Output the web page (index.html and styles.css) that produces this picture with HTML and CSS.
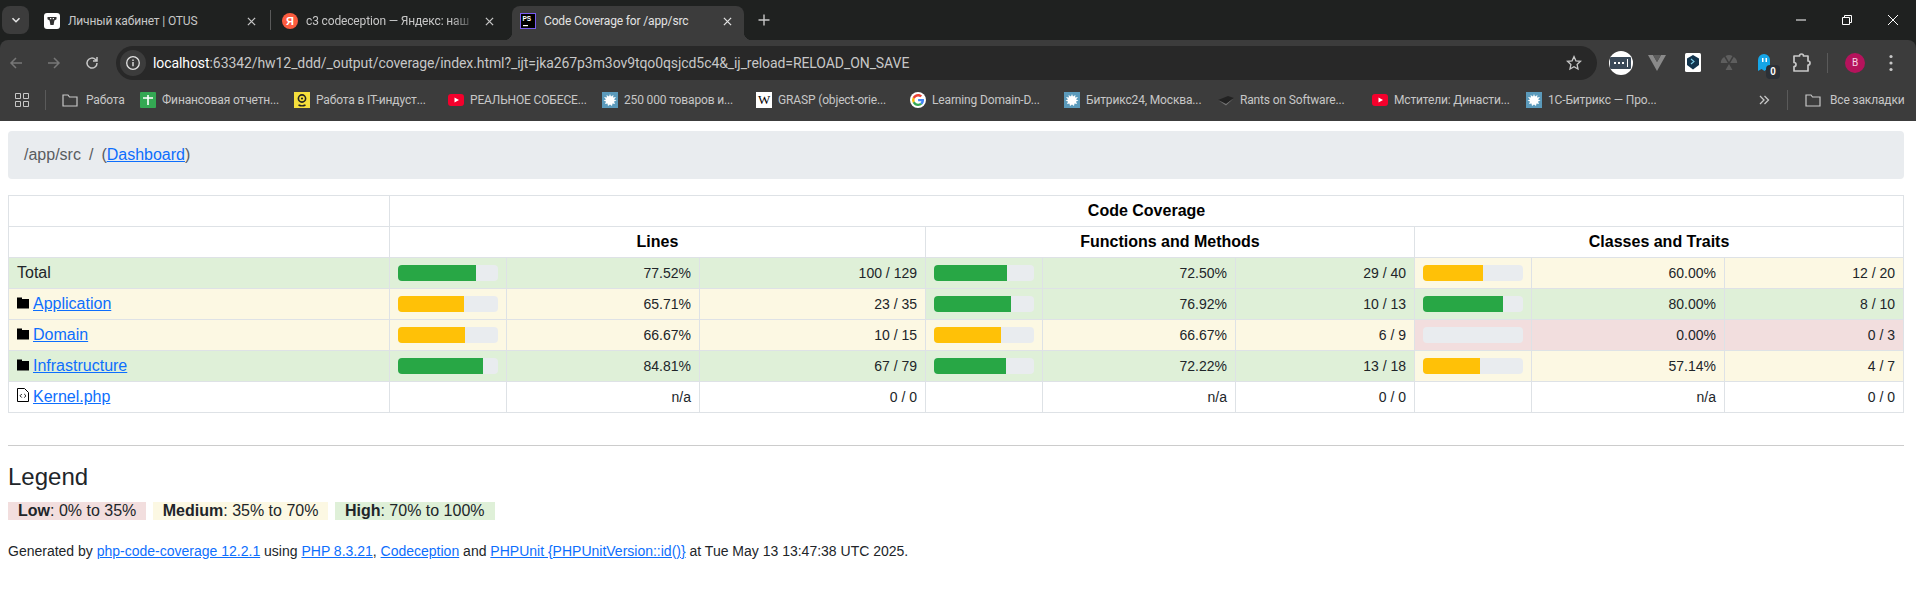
FILE: index.html
```html
<!DOCTYPE html>
<html lang="ru">

<head>
    <meta charset="UTF-8">
    <meta name="viewport" content="width=device-width, initial-scale=1.0">
    <title>Code Coverage for /app/src</title>
    <link rel="stylesheet" href="styles.css">
</head>

<body>
    <header class="browser">
        <div class="tabstrip">
            <div class="tab-search">
                <svg width="12" height="12" viewBox="0 0 12 12"><path d="M2.5 4.2 6 7.7l3.5-3.5" fill="none" stroke="#e3e3e3" stroke-width="1.6"/></svg>
            </div>
            <div class="tab">
                <svg class="favicon" viewBox="0 0 16 16"><rect width="16" height="16" rx="3" fill="#fff"/><path d="M3.5 4h9v2.2L10.4 7.4 9.6 12H6.4L5.6 7.4 3.5 6.2z" fill="#333"/><rect x="6" y="5" width="1.3" height="1.2" fill="#fff"/><rect x="8.7" y="5" width="1.3" height="1.2" fill="#fff"/></svg>
                <span class="tab-title">Личный кабинет | OTUS</span>
                <svg class="tab-close" viewBox="0 0 10 10"><path d="M1 1l8 8M9 1l-8 8" stroke="#c7c7c7" stroke-width="1.4"/></svg>
            </div>
            <div class="tab-sep"></div>
            <div class="tab">
                <span class="favicon ya">Я</span>
                <span class="tab-title tab-title-fade">c3 codeception — Яндекс: наш</span>
                <svg class="tab-close" viewBox="0 0 10 10"><path d="M1 1l8 8M9 1l-8 8" stroke="#c7c7c7" stroke-width="1.4"/></svg>
            </div>
            <div class="tab tab-active">
                <svg class="favicon" viewBox="0 0 16 16"><rect x=".5" y=".5" width="15" height="15" fill="#000" stroke="#7a5cf0"/><text x="2.5" y="8" class="ps-text">PS</text><rect x="3" y="12" width="5" height="1.2" fill="#fff"/></svg>
                <span class="tab-title">Code Coverage for /app/src</span>
                <svg class="tab-close" viewBox="0 0 10 10"><path d="M1 1l8 8M9 1l-8 8" stroke="#e3e3e3" stroke-width="1.4"/></svg>
            </div>
            <svg class="new-tab" width="14" height="14" viewBox="0 0 14 14"><path d="M7 1.5v11M1.5 7h11" stroke="#c7c7c7" stroke-width="1.4"/></svg>
            <div class="window-controls">
                <svg width="12" height="12" viewBox="0 0 12 12"><path d="M1 6h10" stroke="#fff"/></svg>
                <svg width="12" height="12" viewBox="0 0 12 12"><path d="M1.5 3.5h7v7h-7zM3.5 3.5v-2h7v7h-2" fill="none" stroke="#fff"/></svg>
                <svg width="12" height="12" viewBox="0 0 12 12"><path d="M1 1l10 10M11 1L1 11" stroke="#fff"/></svg>
            </div>
        </div>

        <div class="toolbar">
            <svg class="nav-icon" viewBox="0 0 16 16"><path d="M14 8H3M8 3 3 8l5 5" fill="none" stroke="#777" stroke-width="1.5"/></svg>
            <svg class="nav-icon" viewBox="0 0 16 16"><path d="M2 8h11M8 3l5 5-5 5" fill="none" stroke="#777" stroke-width="1.5"/></svg>
            <svg class="nav-icon" viewBox="0 0 16 16"><path d="M13 8a5 5 0 1 1-1.5-3.5L13 6M13 2v4H9" fill="none" stroke="#c7c7c7" stroke-width="1.5"/></svg>
            <div class="omnibox">
                <span class="site-info">
                    <svg width="16" height="16" viewBox="0 0 16 16"><circle cx="8" cy="8" r="6.3" fill="none" stroke="#e3e3e3" stroke-width="1.3"/><path d="M8 7v4.2M8 4.6v1.3" stroke="#e3e3e3" stroke-width="1.4"/></svg>
                </span>
                <span class="url"><b>localhost</b>:63342/hw12_ddd/_output/coverage/index.html?_ijt=jka267p3m3ov9tqo0qsjcd5c4&amp;_ij_reload=RELOAD_ON_SAVE</span>
                <svg class="star" width="16" height="16" viewBox="0 0 16 16"><path d="M8 1.6l1.9 4.2 4.6.5-3.4 3.1.9 4.6L8 11.7 4 14l.9-4.6-3.4-3.1 4.6-.5z" fill="none" stroke="#c7c7c7" stroke-width="1.3"/></svg>
            </div>
            <div class="extensions">
                <svg class="ext" viewBox="0 0 24 24"><circle cx="12" cy="12" r="12" fill="#fff"/><rect x="1" y="6" width="21" height="12" rx="1" fill="#3b4a59"/><path d="M5 11h2v2H5zM9 11h2v2H9zM13 11h2v2h-2z" fill="#fff"/><rect x="18" y="8" width="1" height="8" fill="#fff"/></svg>
                <svg class="ext" viewBox="0 0 24 24"><path d="M3 4h5l4 7 4-7h5L12 20z" fill="#8a8a8a"/><path d="M8 4h8l-4 7z" fill="#5c5c5c"/></svg>
                <svg class="ext" viewBox="0 0 24 24"><rect x="4" y="2" width="16" height="19" rx="1.5" fill="#fff"/><path d="M12 4l6 3.5V14l-6 4.5L6 14V7.500z" fill="#12344d"/><path d="M10 8l3 2.500-3 2.500" fill="none" stroke="#7fd0ea" stroke-width="1.100"/></svg>
                <svg class="ext" viewBox="0 0 24 24"><g fill="#5e5e5e"><path d="M12 11 8.500 5a7 7 0 0 1 7 0zM12 13l3.500 6h-7zM10.800 12h-7a7 7 0 0 1 3.500-6zM13.200 12h7a7 7 0 0 0-3.500-6z"/></g></svg>
                <span class="ext ghost">
                    <svg viewBox="0 0 24 24"><path d="M5 20V9a6 6 0 0 1 12 0v11l-3-2-2.500 2-3-2z" fill="#16a6e8"/><rect x="9" y="7" width="1.500" height="4" fill="#fff"/><rect x="12.500" y="7" width="1.500" height="4" fill="#fff"/></svg>
                    <b class="ghost-badge">0</b>
                </span>
                <svg class="ext" viewBox="0 0 24 24"><path d="M5 5h5.500a2 2 0 0 1 4 0H19v5a2 2 0 0 1 0 4v6H5v-4.500a2 2 0 0 0 0-4z" fill="none" stroke="#c7c7c7" stroke-width="1.700" stroke-linejoin="round"/></svg>
                <div class="ext-sep"></div>
                <span class="avatar">В</span>
                <svg class="menu-dots" width="4" height="18" viewBox="0 0 4 18"><circle cx="2" cy="2.500" r="1.600" fill="#c7c7c7"/><circle cx="2" cy="9" r="1.600" fill="#c7c7c7"/><circle cx="2" cy="15.500" r="1.600" fill="#c7c7c7"/></svg>
            </div>
        </div>

        <div class="bookmarks">
            <svg class="apps" width="14" height="14" viewBox="0 0 14 14"><path d="M.5.5h5v5h-5zM8.500.5h5v5h-5zM.5 8.500h5v5h-5zM8.500 8.500h5v5h-5z" fill="none" stroke="#c7c7c7"/></svg>
            <div class="bm-sep"></div>
            <div class="bm bm-folder">
                <svg class="favicon" viewBox="0 0 16 16"><path d="M1 3h5l1.500 2H15v9H1z" fill="none" stroke="#c7c7c7" stroke-width="1.200"/></svg>
                <span>Работа</span>
            </div>
            <div class="bm">
                <svg class="favicon" viewBox="0 0 16 16"><rect width="16" height="16" rx="1" fill="#34a853"/><path d="M3 6h10M8 3v10" stroke="#fff" stroke-width="1.600"/></svg>
                <span>Финансовая отчетн...</span>
            </div>
            <div class="bm">
                <svg class="favicon" viewBox="0 0 16 16"><rect width="16" height="16" fill="#f5df3c"/><circle cx="8" cy="6.500" r="3.600" fill="none" stroke="#222" stroke-width="1.600"/><circle cx="8" cy="6.500" r="1.100" fill="#222"/><path d="M4.500 13c2 1 5 1 7 0" fill="none" stroke="#222" stroke-width="1.400"/></svg>
                <span>Работа в IT-индуст...</span>
            </div>
            <div class="bm">
                <svg class="favicon" viewBox="0 0 16 16"><rect y="2" width="16" height="12" rx="3" fill="#f4002c"/><path d="M6.500 5.500 11 8l-4.500 2.500z" fill="#fff"/></svg>
                <span>РЕАЛЬНОЕ СОБЕСЕ...</span>
            </div>
            <div class="bm">
                <svg class="favicon" viewBox="0 0 16 16"><rect width="16" height="16" fill="#5b9abb"/><path d="M8 2l1 2.500L11.500 3 11 5.500l3-.5-2 2.500 2.500 1-2.500 1 1 2.500-2.500-.5L10 14l-2-1.500L6 14l-.5-2.500L3 12l1-2.500L1.500 8.500 4 7.500 2 5l3 .5L4.500 3 7 4.500z" fill="#fff"/></svg>
                <span>250 000 товаров и...</span>
            </div>
            <div class="bm">
                <span class="favicon wiki">W</span>
                <span>GRASP (object-orie...</span>
            </div>
            <div class="bm">
                <svg class="favicon" viewBox="0 0 16 16"><circle cx="8" cy="8" r="8" fill="#fff"/><path d="M14 8.200c0-.5 0-.9-.1-1.300H8.100v2.400h3.300c-.1.800-.6 1.400-1.200 1.800l1.900 1.500c1.200-1 1.900-2.600 1.900-4.400z" fill="#4285f4"/><path d="M8.100 14c1.600 0 3-.5 4-1.400l-1.900-1.500c-.5.400-1.200.6-2.100.6-1.600 0-2.900-1-3.400-2.500l-2 1.500C3.700 12.700 5.700 14 8.100 14z" fill="#34a853"/><path d="M4.700 9.200C4.400 8.400 4.400 7.600 4.700 6.800l-2-1.500a6 6 0 0 0 0 5.400z" fill="#fbbc05"/><path d="M8.100 4.400c.9 0 1.700.3 2.300.9l1.700-1.700C11.100 2.600 9.700 2 8.100 2 5.700 2 3.700 3.300 2.700 5.300l2 1.500C5.200 5.400 6.500 4.400 8.100 4.400z" fill="#ea4335"/></svg>
                <span>Learning Domain-D...</span>
            </div>
            <div class="bm">
                <svg class="favicon" viewBox="0 0 16 16"><rect width="16" height="16" fill="#5b9abb"/><path d="M8 2l1 2.500L11.500 3 11 5.500l3-.5-2 2.500 2.500 1-2.500 1 1 2.500-2.500-.5L10 14l-2-1.500L6 14l-.5-2.500L3 12l1-2.500L1.500 8.500 4 7.500 2 5l3 .5L4.500 3 7 4.500z" fill="#fff"/></svg>
                <span>Битрикс24, Москва...</span>
            </div>
            <div class="bm">
                <svg class="favicon" viewBox="0 0 16 16"><path d="M0 8l10-4 6 2-8 6z" fill="#222"/><path d="M0 8l8 4 8-6-8 7.500z" fill="#777"/></svg>
                <span>Rants on Software...</span>
            </div>
            <div class="bm">
                <svg class="favicon" viewBox="0 0 16 16"><rect y="2" width="16" height="12" rx="3" fill="#f4002c"/><path d="M6.500 5.500 11 8l-4.500 2.500z" fill="#fff"/></svg>
                <span>Мстители: Династи...</span>
            </div>
            <div class="bm">
                <svg class="favicon" viewBox="0 0 16 16"><rect width="16" height="16" fill="#5b9abb"/><path d="M8 2l1 2.500L11.500 3 11 5.500l3-.5-2 2.500 2.500 1-2.500 1 1 2.500-2.500-.5L10 14l-2-1.500L6 14l-.5-2.500L3 12l1-2.500L1.500 8.500 4 7.500 2 5l3 .5L4.500 3 7 4.500z" fill="#fff"/></svg>
                <span>1С-Битрикс — Про...</span>
            </div>
            <div class="bm-end">
                <svg width="12" height="12" viewBox="0 0 12 12"><path d="M2 2l4 4-4 4M6.500 2l4 4-4 4" fill="none" stroke="#c7c7c7" stroke-width="1.300"/></svg>
                <div class="bm-sep"></div>
                <div class="bm-all">
                    <svg class="favicon" viewBox="0 0 16 16"><path d="M1 3h5l1.500 2H15v9H1z" fill="none" stroke="#c7c7c7" stroke-width="1.200"/></svg>
                    <span>Все закладки</span>
                </div>
            </div>
        </div>
    </header>

    <main class="container">
        <nav class="breadcrumb">/app/src<span class="crumb-sep">/</span>(<a href="#">Dashboard</a>)</nav>

        <table class="coverage">
            <colgroup>
                <col class="col-name">
                <col class="col-bar"><col class="col-pct"><col class="col-num-wide">
                <col class="col-bar"><col class="col-pct"><col class="col-num">
                <col class="col-bar"><col class="col-pct"><col class="col-num">
            </colgroup>
            <thead>
                <tr>
                    <th></th>
                    <th colspan="9">Code Coverage</th>
                </tr>
                <tr>
                    <th></th>
                    <th colspan="3">Lines</th>
                    <th colspan="3">Functions and Methods</th>
                    <th colspan="3">Classes and Traits</th>
                </tr>
            </thead>
            <tbody>
                <tr>
                    <td class="high">Total</td>
                    <td class="high"><div class="progress"><div class="bar bar-high" style="width: 77.52%"></div></div></td>
                    <td class="high small">77.52%</td>
                    <td class="high small">100 / 129</td>
                    <td class="high"><div class="progress"><div class="bar bar-high" style="width: 72.5%"></div></div></td>
                    <td class="high small">72.50%</td>
                    <td class="high small">29 / 40</td>
                    <td class="medium"><div class="progress"><div class="bar bar-medium" style="width: 60%"></div></div></td>
                    <td class="medium small">60.00%</td>
                    <td class="medium small">12 / 20</td>
                </tr>
                <tr>
                    <td class="medium"><svg class="icon" viewBox="0 0 12 12"><path d="M0 .5h5v1.500h7V11.500H0z" fill="#000"/></svg><a href="#">Application</a></td>
                    <td class="medium"><div class="progress"><div class="bar bar-medium" style="width: 65.71%"></div></div></td>
                    <td class="medium small">65.71%</td>
                    <td class="medium small">23 / 35</td>
                    <td class="high"><div class="progress"><div class="bar bar-high" style="width: 76.92%"></div></div></td>
                    <td class="high small">76.92%</td>
                    <td class="high small">10 / 13</td>
                    <td class="high"><div class="progress"><div class="bar bar-high" style="width: 80%"></div></div></td>
                    <td class="high small">80.00%</td>
                    <td class="high small">8 / 10</td>
                </tr>
                <tr>
                    <td class="medium"><svg class="icon" viewBox="0 0 12 12"><path d="M0 .5h5v1.500h7V11.500H0z" fill="#000"/></svg><a href="#">Domain</a></td>
                    <td class="medium"><div class="progress"><div class="bar bar-medium" style="width: 66.67%"></div></div></td>
                    <td class="medium small">66.67%</td>
                    <td class="medium small">10 / 15</td>
                    <td class="medium"><div class="progress"><div class="bar bar-medium" style="width: 66.67%"></div></div></td>
                    <td class="medium small">66.67%</td>
                    <td class="medium small">6 / 9</td>
                    <td class="low"><div class="progress"></div></td>
                    <td class="low small">0.00%</td>
                    <td class="low small">0 / 3</td>
                </tr>
                <tr>
                    <td class="high"><svg class="icon" viewBox="0 0 12 12"><path d="M0 .5h5v1.500h7V11.500H0z" fill="#000"/></svg><a href="#">Infrastructure</a></td>
                    <td class="high"><div class="progress"><div class="bar bar-high" style="width: 84.81%"></div></div></td>
                    <td class="high small">84.81%</td>
                    <td class="high small">67 / 79</td>
                    <td class="high"><div class="progress"><div class="bar bar-high" style="width: 72.22%"></div></div></td>
                    <td class="high small">72.22%</td>
                    <td class="high small">13 / 18</td>
                    <td class="medium"><div class="progress"><div class="bar bar-medium" style="width: 57.14%"></div></div></td>
                    <td class="medium small">57.14%</td>
                    <td class="medium small">4 / 7</td>
                </tr>
                <tr>
                    <td><svg class="icon icon-file" viewBox="0 0 12 14"><path d="M.5.500h7l4 4v9h-11z" fill="#fff" stroke="#000"/><path d="M4.800 6 3 7.800l1.800 1.800M7.200 6 9 7.800 7.200 9.600" fill="none" stroke="#000" stroke-width=".9"/></svg><a href="#">Kernel.php</a></td>
                    <td></td>
                    <td class="small">n/a</td>
                    <td class="small">0 / 0</td>
                    <td></td>
                    <td class="small">n/a</td>
                    <td class="small">0 / 0</td>
                    <td></td>
                    <td class="small">n/a</td>
                    <td class="small">0 / 0</td>
                </tr>
            </tbody>
        </table>

        <hr class="divider">

        <h4 class="legend-title">Legend</h4>
        <div class="legend">
            <span class="low"><strong>Low</strong>: 0% to 35%</span>
            <span class="medium"><strong>Medium</strong>: 35% to 70%</span>
            <span class="high"><strong>High</strong>: 70% to 100%</span>
        </div>
        <p class="generated">Generated by <a href="#">php-code-coverage 12.2.1</a> using <a href="#">PHP 8.3.21</a>, <a href="#">Codeception</a> and <a href="#">PHPUnit {PHPUnitVersion::id()}</a> at Tue May 13 13:47:38 UTC 2025.</p>
    </main>
</body>

</html>
```

FILE: styles.css
```css
* {
    box-sizing: border-box;
}

body {
    margin: 0;
    font-family: "Liberation Sans", Arial, sans-serif;
    font-size: 16px;
    line-height: 24px;
    color: #212529;
    background-color: #fff;
    overflow: hidden;
}

a {
    color: #0d6efd;
    text-decoration: underline;
}

/* browser window */
.browser {
    height: 121px;
    background-color: #1f2120;
    font-family: Roboto, "Noto Sans", sans-serif;
    font-size: 12px;
    line-height: 16px;
    letter-spacing: -0.15px;
    color: #c7c7c7;
}

.tabstrip {
    display: flex;
    align-items: flex-end;
    height: 40px;
    padding-left: 2px;
}

.tab-search {
    display: flex;
    justify-content: center;
    align-items: center;
    width: 27px;
    height: 28px;
    margin: 0 3px 6px 0;
    border-radius: 8px;
    background-color: #3c3c3c;
}

.favicon {
    flex: none;
    width: 16px;
    height: 16px;
}

.tab {
    display: flex;
    align-items: center;
    flex: none;
    gap: 8px;
    width: 238px;
    height: 34px;
    padding: 0 14px 4px 12px;
}

.tab-title {
    flex: 1;
    overflow: hidden;
    white-space: nowrap;
}

.tab-title-fade {
    -webkit-mask-image: linear-gradient(to right, #000 85%, transparent);
    mask-image: linear-gradient(to right, #000 85%, transparent);
}

.tab-close {
    flex: none;
    width: 9px;
    height: 9px;
}

.tab-sep {
    flex: none;
    width: 1px;
    height: 20px;
    margin: 0 -1px 10px 0;
    background-color: #5a5a5a;
}

.tab-active {
    position: relative;
    width: 232px;
    margin: 0 3px 0 4px;
    padding-left: 8px;
    padding-right: 12px;
    border-radius: 8px 8px 0 0;
    background-color: #3c3c3c;
    color: #e3e3e3;
}

.tab-active::before,
.tab-active::after {
    content: "";
    position: absolute;
    bottom: 0;
    width: 8px;
    height: 8px;
}

.tab-active::before {
    left: -8px;
    background: radial-gradient(circle at 0 0, transparent 8px, #3c3c3c 8.5px);
}

.tab-active::after {
    right: -8px;
    background: radial-gradient(circle at 100% 0, transparent 8px, #3c3c3c 8.5px);
}

.ya {
    display: flex;
    justify-content: center;
    align-items: center;
    border-radius: 50%;
    background-color: #fc5c3f;
    color: #fff;
    font-family: "Liberation Sans", sans-serif;
    font-size: 11px;
    font-weight: bold;
}

.ps-text {
    font-family: "Liberation Sans", sans-serif;
    font-size: 6.5px;
    font-weight: bold;
    fill: #fff;
}

.new-tab {
    margin: 0 0 13px 10px;
}

.window-controls {
    display: flex;
    gap: 34px;
    margin: 0 17px 14px auto;
}

.toolbar {
    display: flex;
    align-items: center;
    height: 44px;
    padding: 6px 8px 4px 8px;
    border-radius: 8px 8px 0 0;
    background-color: #3c3c3c;
}

.nav-icon {
    flex: none;
    width: 16px;
    height: 16px;
    margin-right: 22px;
}

.nav-icon:nth-child(3) {
    margin-right: 16px;
}

.omnibox {
    display: flex;
    align-items: center;
    width: 1481px;
    height: 34px;
    padding: 0 15px 0 4px;
    border-radius: 17px;
    background-color: #282828;
}

.site-info {
    display: flex;
    justify-content: center;
    align-items: center;
    width: 26px;
    height: 26px;
    margin-right: 7px;
    border-radius: 50%;
    background-color: #3c3c3c;
}

.url {
    flex: 1;
    font-size: 14px;
    letter-spacing: -0.08px;
    color: #c7c7c7;
    white-space: nowrap;
}

.url b {
    font-weight: normal;
    color: #fff;
}

.extensions {
    display: flex;
    align-items: center;
    flex: 1;
}

.ext {
    flex: none;
    width: 24px;
    height: 24px;
    margin-left: 12px;
}

.ghost {
    position: relative;
    display: block;
}

.ghost svg {
    display: block;
    width: 24px;
    height: 24px;
}

.ghost-badge {
    position: absolute;
    right: -3px;
    bottom: -4px;
    width: 14px;
    height: 14px;
    border-radius: 4px;
    background-color: #2b3036;
    color: #fff;
    font-family: "Liberation Sans", sans-serif;
    font-size: 10px;
    line-height: 14px;
    text-align: center;
}

.ext-sep {
    flex: none;
    width: 1px;
    height: 20px;
    margin-left: 14px;
    background-color: #5a5a5a;
}

.avatar {
    flex: none;
    width: 20px;
    height: 20px;
    margin-left: 17px;
    border-radius: 50%;
    background-color: #b5135c;
    color: #f5d5e3;
    font-size: 10px;
    line-height: 20px;
    text-align: center;
}

.menu-dots {
    flex: none;
    margin-left: 24px;
}

.bookmarks {
    display: flex;
    align-items: center;
    height: 32px;
    padding-left: 15px;
    background-color: #3c3c3c;
    box-shadow: 0 5px 0 #3c3c3c;
}

.apps {
    flex: none;
}

.bm-sep {
    flex: none;
    width: 1px;
    height: 20px;
    margin: 0 16px;
    background-color: #5a5a5a;
}

.bm {
    display: flex;
    align-items: center;
    flex: none;
    gap: 6px;
    width: 154px;
    white-space: nowrap;
}

.bm-folder {
    gap: 8px;
    width: 78px;
}

.bm-end {
    display: flex;
    align-items: center;
    margin-left: 78px;
}

.bm-end .bm-sep {
    margin: 0 17px 0 17px;
}

.bm-all {
    display: flex;
    align-items: center;
    gap: 9px;
    white-space: nowrap;
}

.wiki {
    display: block;
    background-color: #fff;
    color: #000;
    font-family: "Liberation Serif", serif;
    font-size: 13px;
    line-height: 16px;
    text-align: center;
}

/* page */
.container {
    padding: 10px 12px 0 8px;
}

.breadcrumb {
    height: 48px;
    margin-bottom: 16px;
    padding: 12px 16px;
    border-radius: 4px;
    background-color: #e9ecef;
    color: #595c5f;
}

.crumb-sep {
    margin: 0 8px;
}

.coverage {
    width: 1896px;
    table-layout: fixed;
    border-collapse: collapse;
    color: #212529;
}

.col-name {
    width: 381px;
}

.col-bar {
    width: 117px;
}

.col-pct {
    width: 193px;
}

.col-num-wide {
    width: 226px;
}

.col-num {
    width: 179px;
}

.coverage th,
.coverage td {
    height: 31px;
    padding: 3px 8px;
    border: 1px solid #dee2e6;
    vertical-align: middle;
}

.coverage th {
    color: #000;
    text-align: center;
}

.coverage .small {
    font-size: 14px;
    text-align: right;
}

.high {
    background-color: #dff0d8;
}

.medium {
    background-color: #fcf8e3;
}

.low {
    background-color: #f2dede;
}

.progress {
    width: 100px;
    height: 16px;
    overflow: hidden;
    border-radius: 4px;
    background-color: #e9ecef;
}

.bar {
    height: 100%;
}

.bar-high {
    background-color: #28a745;
}

.bar-medium {
    background-color: #ffc107;
}

.icon {
    width: 12px;
    height: 12px;
    margin-right: 4px;
}

.icon-file {
    height: 14px;
}

.divider {
    height: 1px;
    margin: 32px 0 16px;
    border: 0;
    background-color: #ccc;
}

.legend-title {
    margin: 0 0 11px;
    font-size: 24px;
    font-weight: 400;
    line-height: 29px;
}

.legend {
    display: flex;
    gap: 6.5px;
    margin-bottom: 21px;
    line-height: 18px;
}

.legend span {
    padding: 0 10px;
}

.generated {
    margin: 0;
    font-size: 14px;
    line-height: 21px;
}
```
